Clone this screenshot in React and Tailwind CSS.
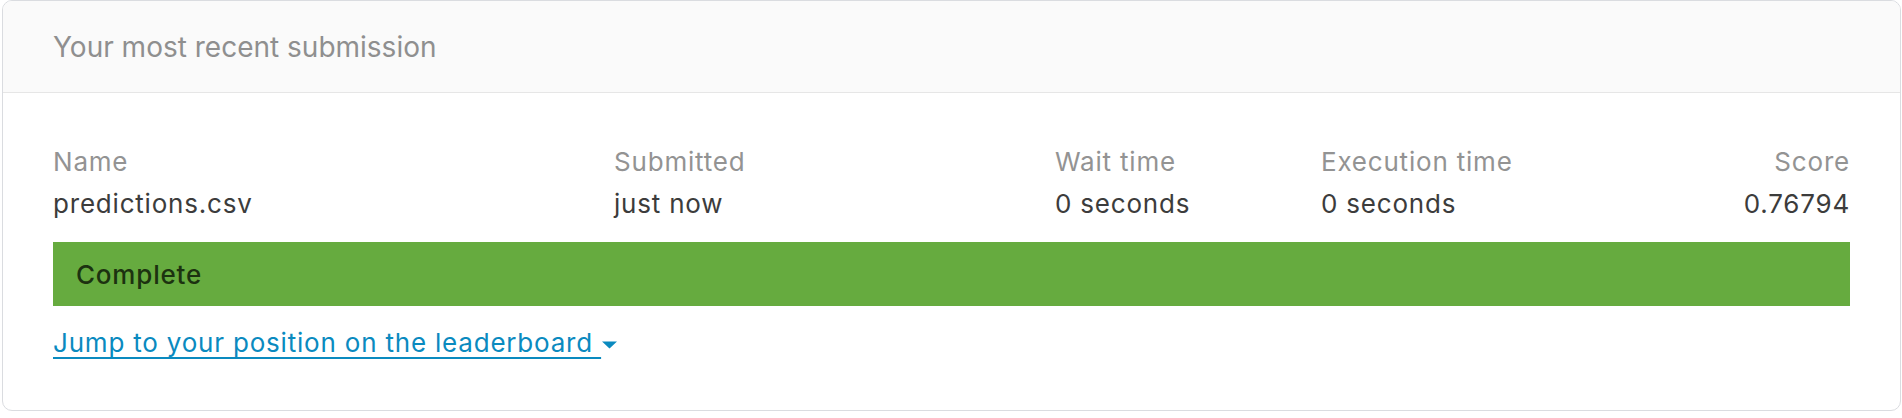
export default function App() {
  return (
    <div className="w-[1902px] h-[418px] bg-white pl-[2px] pr-[1px]" style={{ fontFamily: "Inter, 'Noto Sans', sans-serif" }}>
      <div className="h-[411px] border border-[#dadce0] rounded-[10px] overflow-hidden flex flex-col">
        <div className="h-[92px] bg-[#fafafa] border-b border-[#e6e6e6] flex items-center px-[50px] text-[28px] text-[#8f8f8f]">
          Your most recent submission
        </div>
        <div className="flex flex-col px-[50px] pt-[48px] text-[26px] tracking-[0.8px]">
          <div className="grid grid-cols-[561px_441px_266px_1fr] leading-[42px]">
            <div className="flex flex-col">
              <span className="text-[#939393]">Name</span>
              <span className="text-[#3c3c3c]">predictions.csv</span>
            </div>
            <div className="flex flex-col">
              <span className="text-[#939393]">Submitted</span>
              <span className="text-[#3c3c3c]">just now</span>
            </div>
            <div className="flex flex-col">
              <span className="text-[#939393]">Wait time</span>
              <span className="text-[#3c3c3c]">0 seconds</span>
            </div>
            <div className="grid grid-cols-[1fr_auto]">
              <div className="flex flex-col">
                <span className="text-[#939393]">Execution time</span>
                <span className="text-[#3c3c3c]">0 seconds</span>
              </div>
              <div className="flex flex-col items-end">
                <span className="text-[#939393]">Score</span>
                <span className="text-[#3c3c3c]">0.76794</span>
              </div>
            </div>
          </div>
          <div className="mt-[17px] h-[64px] bg-[#66ab3f] flex items-center px-[23px] font-medium text-[#1c3210]">
            Complete
          </div>
          <div className="mt-[16px] leading-[42px]">
            <a href="#" className="text-[#0a8abf] underline underline-offset-[5px] decoration-[2px] inline-flex items-center">
              <span className="whitespace-pre">{"Jump to your position on the leaderboard "}</span>
              <svg width="15" height="8" viewBox="0 0 15 8" className="ml-[1px] mt-[3px]">
                <path d="M0 0.5 L15 0.5 L7.5 7.5 Z" fill="#0a8abf" />
              </svg>
            </a>
          </div>
        </div>
      </div>
    </div>
  );
}
